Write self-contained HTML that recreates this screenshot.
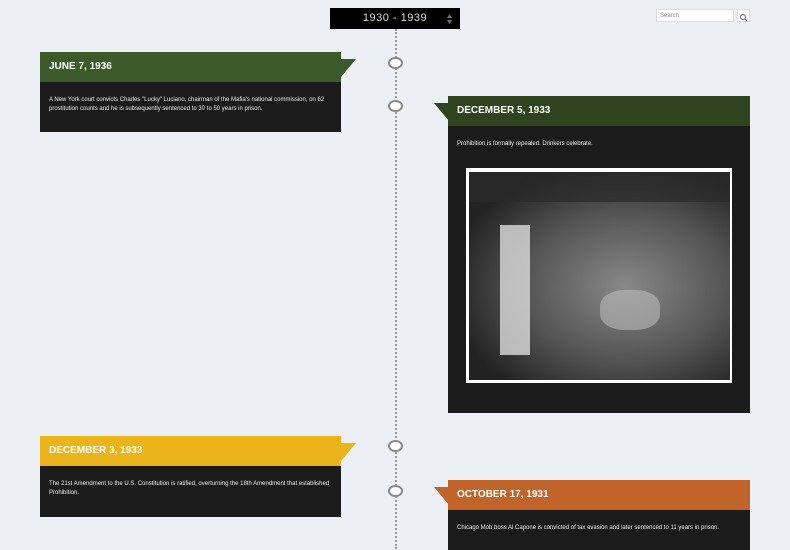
<!DOCTYPE html>
<html><head><style>
body{margin:0;width:790px;height:540px;background:#ecf0f4;position:relative;overflow:hidden;font-family:"Liberation Sans",sans-serif}
.abs{position:absolute}
.yr{left:330px;top:8px;width:130px;height:21px;background:#000;color:#ddd;font-size:11px;line-height:21px;text-align:center;letter-spacing:.5px}
.line{left:395px;top:29px;height:520px;border-left:2px dotted #999}
.dot{width:11px;height:8px;border:2px solid #888;border-radius:50%;background:#fff;left:388px}
.hd{color:#fff;font-weight:bold;font-size:10px;line-height:30px;padding-left:9px;box-sizing:border-box;height:30px}
.bd{background:#1b1b1b;color:#eee;font-size:6px;line-height:9px;padding:14px 9px;box-sizing:border-box}
.s{left:656px;top:9px;width:78px;height:13px;background:#fff;border:1px solid #ddd;font-size:6px;color:#888;line-height:13px;padding-left:3px;box-sizing:border-box}
.sb{left:737px;top:9px;width:13px;height:13px;background:#fff;border:1px solid #ddd;box-sizing:border-box}
</style></head><body>
<div class="abs line"></div>
<div class="abs yr">1930 - 1939<svg style="position:absolute;right:8px;top:6px" width="5" height="10"><path d="M0 4L2.5 0L5 4ZM0 6L2.5 10L5 6Z" fill="#777"/></svg></div>
<div class="abs s">Search</div>
<div class="abs sb"><svg width="11" height="11" viewBox="0 0 11 11"><circle cx="5" cy="5" r="2.5" fill="none" stroke="#666"/><path d="M7 7l2 2" stroke="#666"/></svg></div>
<div class="abs dot" style="top:57px"></div>
<div class="abs dot" style="top:100px"></div>
<div class="abs dot" style="top:440px"></div>
<div class="abs dot" style="top:485px"></div>

<svg class="abs" style="left:341px;top:52px" width="15" height="30"><path d="M0 7H15L0 25Z" fill="#3c5b2a"/></svg>
<div class="abs hd" style="left:40px;top:52px;width:301px;background:#3c5b2a">JUNE 7, 1936</div>
<div class="abs bd" style="left:40px;top:82px;width:301px;height:50px">A New York court convicts Charles "Lucky" Luciano, chairman of the Mafia's national commission, on 62 prostitution counts and he is subsequently sentenced to 30 to 50 years in prison.</div>

<svg class="abs" style="left:434px;top:96px" width="15" height="30"><path d="M15 7H0L15 25Z" fill="#2f4320"/></svg>
<div class="abs hd" style="left:448px;top:96px;width:302px;background:#2f4320">DECEMBER 5, 1933</div>
<div class="abs bd" style="left:448px;top:126px;width:302px;height:287px">Prohibition is formally repealed. Drinkers celebrate.</div>
<div class="abs" style="left:466px;top:168px;width:266px;height:215px;background:#fff"></div>
<div class="abs" style="left:469px;top:172px;width:261px;height:208px;background:radial-gradient(ellipse at 60% 55%,#888,#555 45%,#222 80%);"></div>
<div class="abs" style="left:469px;top:172px;width:261px;height:30px;background:#2a2a2a;opacity:.7"></div>
<div class="abs" style="left:500px;top:225px;width:30px;height:130px;background:#ddd;opacity:.8"></div>
<div class="abs" style="left:600px;top:290px;width:60px;height:40px;background:#bbb;opacity:.6;border-radius:40%"></div>

<svg class="abs" style="left:341px;top:436px" width="15" height="30"><path d="M0 7H15L0 25Z" fill="#eab41a"/></svg>
<div class="abs hd" style="left:40px;top:436px;width:301px;background:#eab41a">DECEMBER 3, 1933</div>
<div class="abs bd" style="left:40px;top:466px;width:301px;height:51px">The 21st Amendment to the U.S. Constitution is ratified, overturning the 18th Amendment that established Prohibition.</div>

<svg class="abs" style="left:434px;top:480px" width="15" height="30"><path d="M15 7H0L15 25Z" fill="#c0642a"/></svg>
<div class="abs hd" style="left:448px;top:480px;width:302px;background:#c0642a">OCTOBER 17, 1931</div>
<div class="abs bd" style="left:448px;top:510px;width:302px;height:40px">Chicago Mob boss Al Capone is convicted of tax evasion and later sentenced to 11 years in prison.</div>
</body></html>
